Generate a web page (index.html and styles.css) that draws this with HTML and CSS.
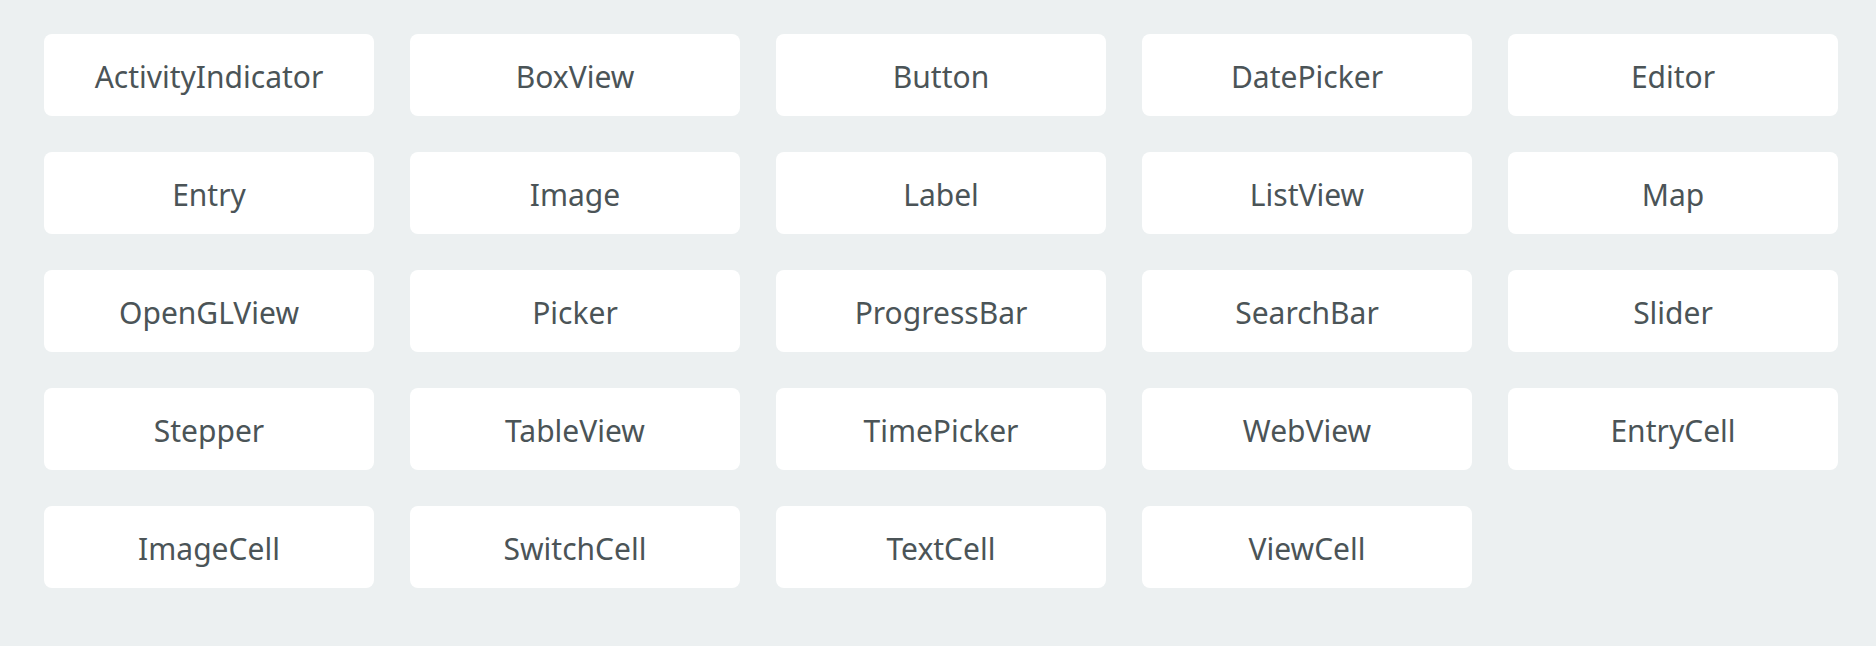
FILE: index.html
```html
<!DOCTYPE html>
<html>
<head>
<meta charset="utf-8">
<link rel="stylesheet" href="styles.css">
</head>
<body>
<div class="grid">
  <div class="card">ActivityIndicator</div>
  <div class="card">BoxView</div>
  <div class="card">Button</div>
  <div class="card">DatePicker</div>
  <div class="card">Editor</div>
  <div class="card">Entry</div>
  <div class="card">Image</div>
  <div class="card">Label</div>
  <div class="card">ListView</div>
  <div class="card">Map</div>
  <div class="card">OpenGLView</div>
  <div class="card">Picker</div>
  <div class="card">ProgressBar</div>
  <div class="card">SearchBar</div>
  <div class="card">Slider</div>
  <div class="card">Stepper</div>
  <div class="card">TableView</div>
  <div class="card">TimePicker</div>
  <div class="card">WebView</div>
  <div class="card">EntryCell</div>
  <div class="card">ImageCell</div>
  <div class="card">SwitchCell</div>
  <div class="card">TextCell</div>
  <div class="card">ViewCell</div>
</div>
</body>
</html>
```
FILE: styles.css
```css
html, body {
  margin: 0;
  padding: 0;
  background: #ecf0f1;
}
body {
  font-family: "Noto Sans", "Open Sans", sans-serif;
}
.grid {
  display: grid;
  grid-template-columns: repeat(5, 330px);
  grid-auto-rows: 82px;
  gap: 36px;
  padding: 34px 0 0 44px;
}
.card {
  background: #ffffff;
  border-radius: 8px;
  display: flex;
  align-items: center;
  justify-content: center;
  font-size: 30px;
  color: #4b5457;
  padding-top: 2px;
}
```
